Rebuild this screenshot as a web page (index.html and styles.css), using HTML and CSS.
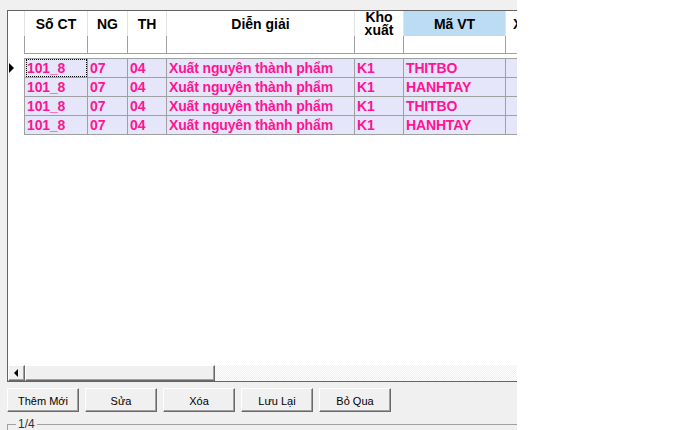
FILE: index.html
```
<!DOCTYPE html>
<html lang="vi">
<head>
  <meta charset="UTF-8">
  <title>Phiếu xuất kho</title>
  <link rel="stylesheet" href="styles.css">
</head>
<body>
  <div class="form">
    <div class="grid">
      <div class="head">
        <div class="line captions">
          <div class="ind"></div>
          <div class="cap">Số CT</div>
          <div class="cap">NG</div>
          <div class="cap">TH</div>
          <div class="cap">Diễn giải</div>
          <div class="cap wrap">Kho xuất</div>
          <div class="cap sorted">Mã VT</div>
          <div class="cap left">Xuất</div>
        </div>
        <div class="line filters">
          <div class="ind"></div>
          <div class="flt"></div>
          <div class="flt"></div>
          <div class="flt"></div>
          <div class="flt"></div>
          <div class="flt"></div>
          <div class="flt"></div>
          <div class="flt"></div>
        </div>
      </div>

      <div class="rows">
        <div class="line row current">
          <div class="ind"><span class="arrow"></span></div>
          <div class="cell focus">101_8</div>
          <div class="cell">07</div>
          <div class="cell">04</div>
          <div class="cell">Xuất nguyên thành phẩm</div>
          <div class="cell">K1</div>
          <div class="cell">THITBO</div>
          <div class="cell"></div>
        </div>
        <div class="line row">
          <div class="ind"></div>
          <div class="cell">101_8</div>
          <div class="cell">07</div>
          <div class="cell">04</div>
          <div class="cell">Xuất nguyên thành phẩm</div>
          <div class="cell">K1</div>
          <div class="cell">HANHTAY</div>
          <div class="cell"></div>
        </div>
        <div class="line row">
          <div class="ind"></div>
          <div class="cell">101_8</div>
          <div class="cell">07</div>
          <div class="cell">04</div>
          <div class="cell">Xuất nguyên thành phẩm</div>
          <div class="cell">K1</div>
          <div class="cell">THITBO</div>
          <div class="cell"></div>
        </div>
        <div class="line row">
          <div class="ind"></div>
          <div class="cell">101_8</div>
          <div class="cell">07</div>
          <div class="cell">04</div>
          <div class="cell">Xuất nguyên thành phẩm</div>
          <div class="cell">K1</div>
          <div class="cell">HANHTAY</div>
          <div class="cell"></div>
        </div>
      </div>

      <div class="hscroll">
        <div class="sb-btn"><span class="sb-left"></span></div>
        <div class="sb-thumb"></div>
        <div class="sb-track"></div>
      </div>
    </div>

    <div class="buttons">
      <button class="btn">Thêm Mới</button>
      <button class="btn">Sửa</button>
      <button class="btn">Xóa</button>
      <button class="btn">Lưu Lại</button>
      <button class="btn">Bỏ Qua</button>
    </div>

    <fieldset class="pager">
      <legend>1/4</legend>
    </fieldset>
  </div>
</body>
</html>
```

FILE: styles.css
```
body {
  margin: 0;
  background: #fff;
  font-family: "Liberation Sans", Arial, sans-serif;
}

.form {
  width: 517px;
  height: 430px;
  overflow: hidden;
  background: #f0f0f0;
  padding: 10px 0 0 7px;
  box-sizing: border-box;
  display: flex;
  flex-direction: column;
}

/* data grid */
.grid {
  width: 510px;
  height: 372px;
  flex: none;
  box-sizing: border-box;
  border-top: 1px solid #646464;
  border-left: 1px solid #646464;
  border-bottom: 1px solid #646464;
  background: #fff;
  overflow: hidden;
  display: flex;
  flex-direction: column;
}

.line {
  display: grid;
  grid-template-columns: 17px 63px 40px 39px 188px 49px 102px 100px;
  flex: none;
}

.line > div {
  box-sizing: border-box;
}

.ind {
  border-right: 1px solid #a0a0a0;
  background: #fff;
}

.captions .ind {
  border-right-color: #e3e3e3;
}

.cap {
  height: 25px;
  border-right: 1px solid #e3e3e3;
  font-size: 14px;
  font-weight: bold;
  color: #000;
  line-height: 16px;
  text-align: center;
  display: flex;
  align-items: center;
  justify-content: center;
  overflow: hidden;
}

.cap.wrap {
  line-height: 13px;
}

.cap.left {
  justify-content: flex-start;
  padding-left: 7px;
}

.cap.sorted {
  background: #bcdcf4;
}

.flt {
  height: 18px;
  border-right: 1px solid #a0a0a0;
  border-bottom: 1px solid #a0a0a0;
}

.rows {
  margin-top: 4px;
}

.cell {
  height: 19px;
  padding-left: 2px;
  border-right: 1px solid #a0a0a0;
  border-bottom: 1px solid #a0a0a0;
  background: #e6e6fa;
  color: #ff1493;
  font-size: 14px;
  font-weight: bold;
  line-height: 18px;
  letter-spacing: -0.15px;
  white-space: nowrap;
  overflow: hidden;
}

.row:first-child .cell {
  height: 20px;
  border-top: 1px solid #a0a0a0;
}

.cell.focus {
  outline: 1px dotted #000;
  outline-offset: -2px;
}

.ind .arrow {
  display: block;
  width: 0;
  height: 0;
  margin: 5px 0 0 1px;
  border-left: 5px solid #000;
  border-top: 5px solid transparent;
  border-bottom: 5px solid transparent;
}

/* horizontal scroll bar */
.hscroll {
  margin-top: auto;
  height: 16px;
  flex: none;
  display: flex;
}

.sb-btn,
.sb-thumb {
  box-sizing: border-box;
  background: #f0f0f0;
  border: 1px solid;
  border-color: #fff #696969 #696969 #fff;
  box-shadow: inset -1px -1px #a0a0a0;
}

.sb-btn {
  width: 17px;
  display: flex;
  align-items: center;
  justify-content: center;
}

.sb-left {
  width: 0;
  height: 0;
  margin-left: -2px;
  border-right: 4px solid #000;
  border-top: 4px solid transparent;
  border-bottom: 4px solid transparent;
}

.sb-thumb {
  width: 190px;
}

.sb-track {
  flex: 1;
  background: repeating-conic-gradient(#f0f0f0 0 25%, #fff 0 50%);
  background-size: 2px 2px;
}

/* command buttons */
.buttons {
  display: flex;
  gap: 6px;
  margin-top: 6px;
}

.btn {
  width: 72px;
  height: 24px;
  padding: 1px 0 0;
  box-sizing: border-box;
  font-family: "Liberation Sans", Arial, sans-serif;
  font-size: 11px;
  color: #000;
  background: #f0f0f0;
  border: 1px solid;
  border-color: #fff #696969 #696969 #fff;
  box-shadow: inset -1px -1px #a0a0a0;
}

/* pager group box: only its top edge shows */
.pager {
  margin: 5px 0 0;
  padding: 0 0 0 8px;
  width: 510px;
  height: 30px;
  box-sizing: border-box;
  border: 1px solid #a0a0a0;
  border-right: 0;
  border-bottom: 0;
}

.pager legend {
  padding: 0 2px;
  font-size: 12px;
  line-height: 14px;
  color: #333;
}
```
